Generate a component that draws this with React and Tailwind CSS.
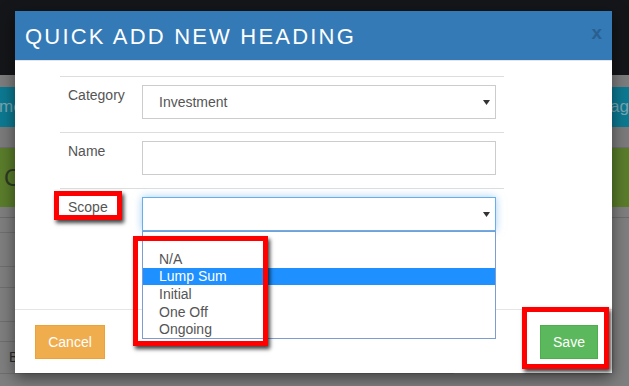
import React from 'react'

const font = { fontFamily: '"Liberation Sans", Arial, sans-serif' }

const Caret = () => (
    <svg width="7" height="5" viewBox="0 0 7 5" className="shrink-0">
        <polygon points="0,0 7,0 3.5,5" fill="#333" />
    </svg>
)

const scopeOptions = ['N/A', 'Lump Sum', 'Initial', 'One Off', 'Ongoing']

const App = () => {
    return (
        <div className="relative w-[629px] h-[386px] overflow-hidden bg-[#7f7f7f]" style={font}>
            {/* Dimmed page behind the modal */}
            <div className="flex flex-col w-full">
                <div className="h-[75px] bg-[#151619]" />
                <div className="h-[12px] bg-[#7d7d7d]" />
                <div className="h-[40px] bg-[#0c7a92] flex items-center justify-between text-[17px] text-[#7aa6b3]">
                    <span className="ml-[-1px]">me</span>
                    <span>ag</span>
                </div>
                <div className="h-[21px] bg-[#7b7b7b] border-b border-[#6f6f6f]" />
                <div className="h-[59px] bg-[#5a7d2b] flex items-center text-[24px] text-[#2c3a22]">
                    <span className="pl-[4px]">C</span>
                </div>
                <div className="h-[11px] border-b border-[#6c6c6c]" />
                <div className="w-[454px] flex flex-col">
                    <div className="h-[15px] border-b border-[#6f6f6f]" />
                    <div className="h-[34px] border-b border-[#6f6f6f]" />
                    <div className="h-[21px] border-b border-[#6f6f6f]" />
                    <div className="h-[34px] border-b border-[#6f6f6f]" />
                    <div className="h-[20px] border-b border-[#6f6f6f]" />
                    <div className="h-[32px] border-b border-[#6f6f6f] flex items-center pl-[9px] text-[14px] text-[#2a2a2a]">
                        BA
                    </div>
                </div>
            </div>

            {/* Modal */}
            <div className="absolute left-[15px] top-[11px] w-[597px] h-[362px] bg-white flex flex-col shadow-[0_5px_15px_rgba(0,0,0,0.5)]">
                <div className="h-[50px] bg-[#337ab7] border-b border-[#e5e5e5] flex items-center justify-between pl-[10px] pr-[10px]">
                    <h1 className="text-[22px] leading-none text-white tracking-[2.2px] mt-[2px]">
                        QUICK ADD NEW HEADING
                    </h1>
                    <span className="text-[19px] font-bold leading-none text-[#2a5f8f] mb-[6px]">x</span>
                </div>

                <div className="flex-1 pt-[15px] pl-[45px]">
                    <div className="w-[444px] flex flex-col text-[14px] text-[#555]">
                        {/* Category */}
                        <div className="h-[56px] border-t border-[#ddd] pt-[8px] flex">
                            <label className="w-[82px] pl-[8px] leading-[20px]">Category</label>
                            <div className="w-[354px] h-[34px] border border-[#ccc] flex items-center justify-between pl-[16px] pr-[5px]">
                                <span>Investment</span>
                                <Caret />
                            </div>
                        </div>

                        {/* Name */}
                        <div className="h-[56px] border-t border-[#ddd] pt-[8px] flex">
                            <label className="w-[82px] pl-[8px] leading-[20px]">Name</label>
                            <div className="w-[354px] h-[34px] border border-[#ccc]" />
                        </div>

                        {/* Scope */}
                        <div className="border-t border-[#ddd] pt-[8px] flex">
                            <label className="w-[82px] pl-[8px] leading-[20px]">Scope</label>
                            <div className="relative w-[354px] h-[34px]">
                                <div className="w-full h-full border border-[#66afe9] shadow-[0_0_8px_rgba(102,175,233,0.6)] flex items-center justify-end pr-[5px]">
                                    <Caret />
                                </div>
                                <ul className="absolute left-0 top-[34px] w-full h-[108px] bg-white border border-[#7b9dd2] pt-[18px]">
                                    {scopeOptions.map((opt) => (
                                        <li
                                            key={opt}
                                            className={`h-[17.6px] flex items-center pl-[16px] leading-none ${opt === 'Lump Sum' ? 'bg-[#1e90ff] text-white' : 'text-[#555]'}`}
                                        >
                                            {opt}
                                        </li>
                                    ))}
                                </ul>
                            </div>
                        </div>
                    </div>
                </div>

                <div className="h-[64px] border-t border-[#e5e5e5] flex items-start justify-between pl-[20px] pr-[14px] pt-[15px]">
                    <button className="w-[70px] h-[34px] bg-[#f0ad4e] border border-[#eea236] text-white text-[14px]">
                        Cancel
                    </button>
                    <button className="w-[58px] h-[34px] bg-[#5cb85c] border border-[#4cae4c] text-white text-[14px]">
                        Save
                    </button>
                </div>
            </div>

            {/* Red annotation boxes */}
            <div className="absolute left-[54px] top-[191px] w-[68px] h-[29px] border-[5px] border-[#ff0000] shadow-[2px_3px_4px_rgba(0,0,0,0.75)]" />
            <div className="absolute left-[133px] top-[236px] w-[135px] h-[110px] border-[5px] border-[#ff0000] shadow-[2px_3px_4px_rgba(0,0,0,0.75)]" />
            <div className="absolute left-[522px] top-[307px] w-[87px] h-[62px] border-[5px] border-[#ff0000] shadow-[2px_3px_4px_rgba(0,0,0,0.75)]" />
        </div>
    )
}

export default App
